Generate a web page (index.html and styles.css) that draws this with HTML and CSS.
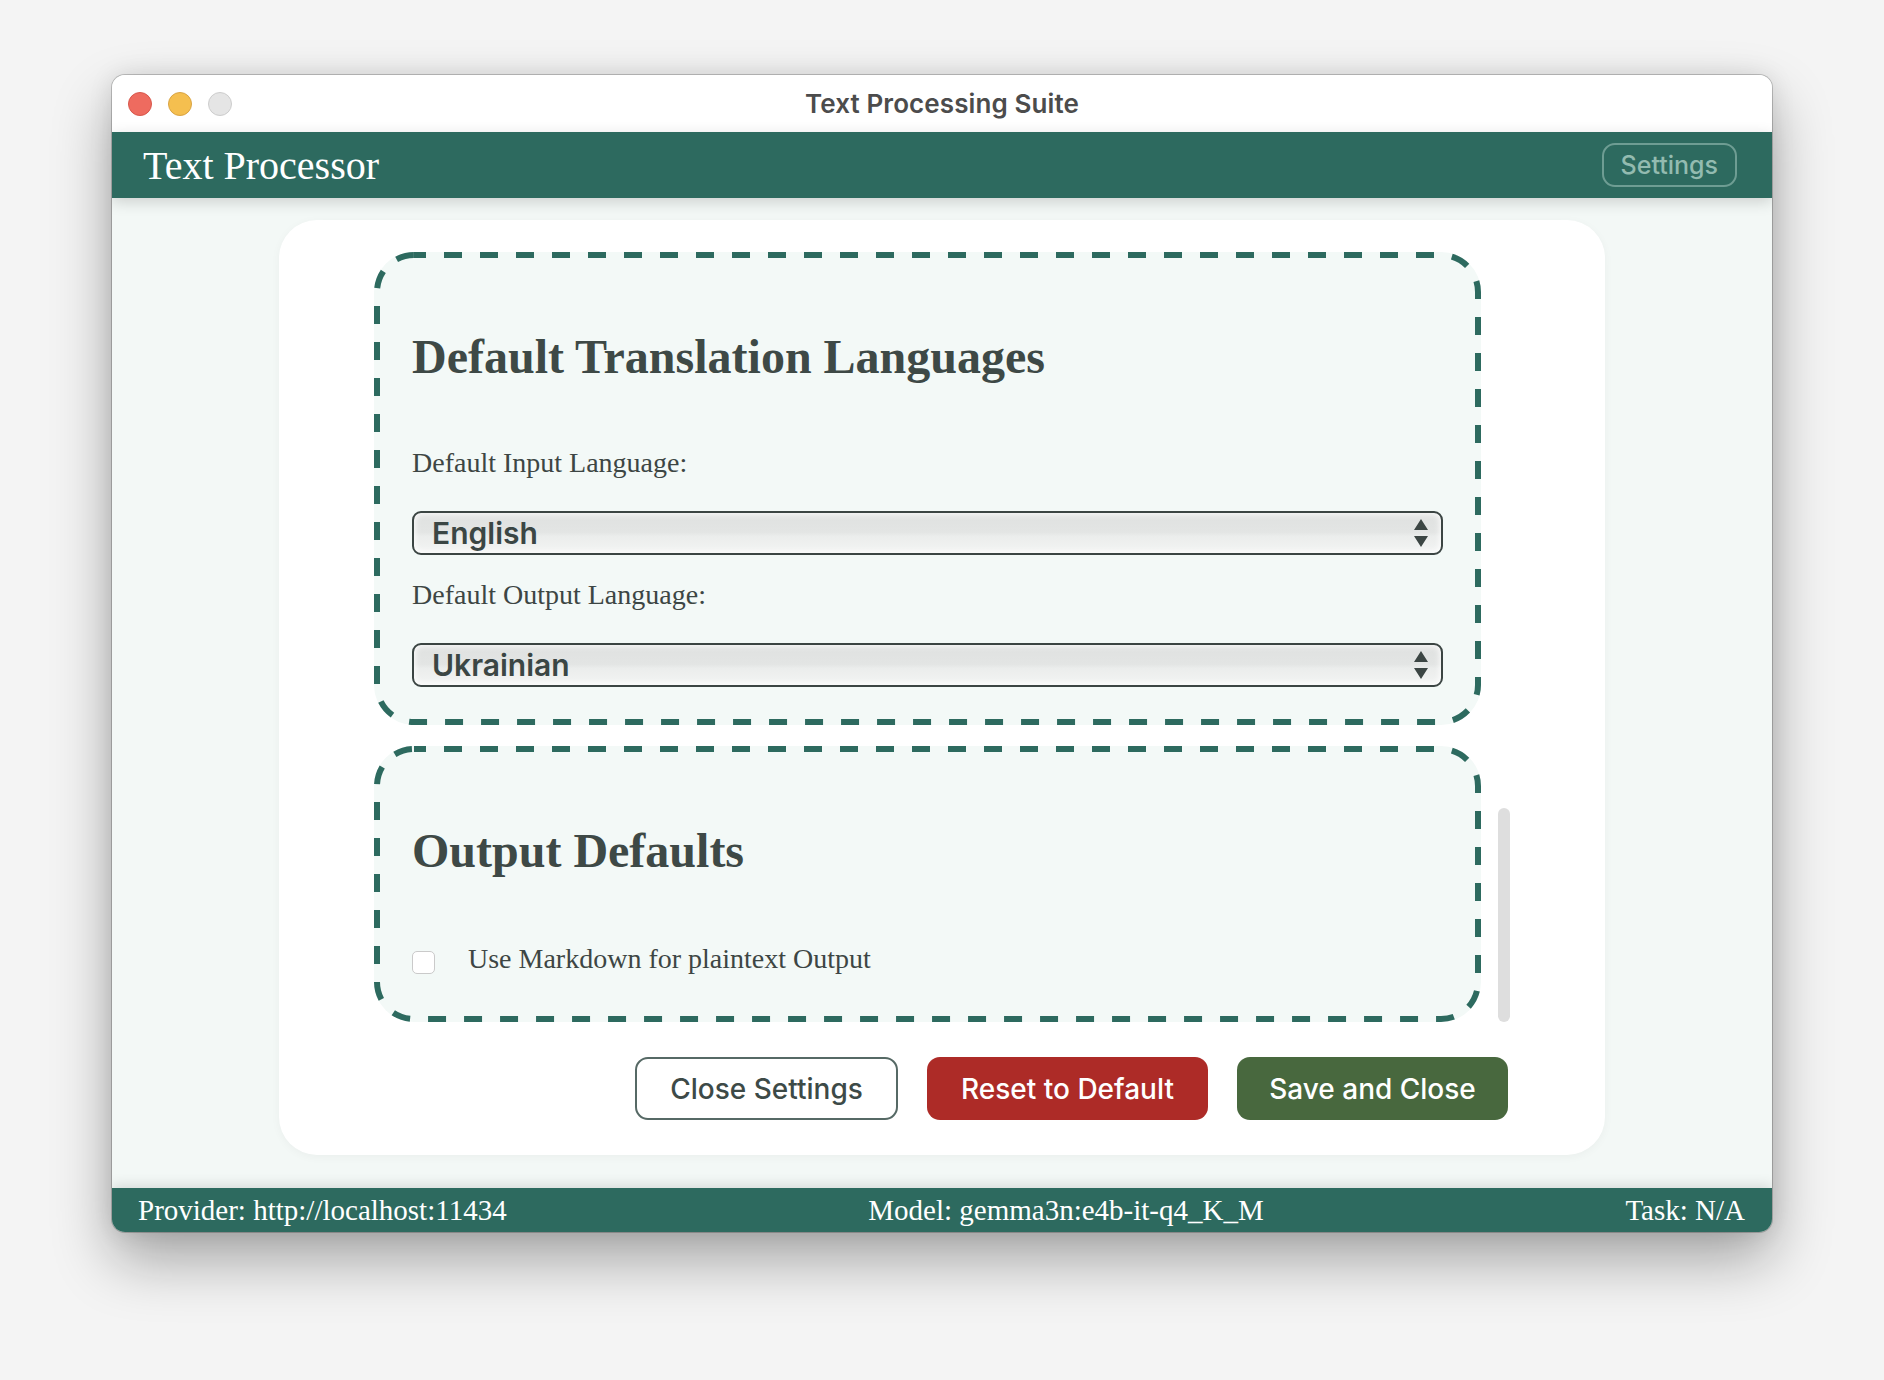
FILE: index.html
```html
<!DOCTYPE html>
<html lang="en">
<head>
<meta charset="utf-8">
<title>Text Processing Suite</title>
<link rel="stylesheet" href="styles.css">
</head>
<body>
<div class="window">
  <div class="titlebar">
    <div class="lights">
      <span class="light red"></span>
      <span class="light yellow"></span>
      <span class="light gray"></span>
    </div>
    <div class="title">Text Processing Suite</div>
    <div></div>
  </div>
  <header class="appbar">
    <h1 class="brand">Text Processor</h1>
    <button class="settings-btn">Settings</button>
  </header>
  <main class="content">
    <div class="card">
      <div class="scroll">
        <div class="sections">
          <section class="group">
            <svg class="dash-frame" aria-hidden="true"><rect class="dash-rect"/></svg>
            <h2 class="group-title">Default Translation Languages</h2>
            <label class="field-label">Default Input Language:</label>
            <div class="select">
              <span class="select-value">English</span>
              <svg class="select-arrows" width="14" height="29" viewBox="0 0 14 29"><path d="M7 0 L14 11 L0 11 Z M0 17 L14 17 L7 28 Z" fill="#3c4644"/></svg>
            </div>
            <label class="field-label">Default Output Language:</label>
            <div class="select">
              <span class="select-value">Ukrainian</span>
              <svg class="select-arrows" width="14" height="29" viewBox="0 0 14 29"><path d="M7 0 L14 11 L0 11 Z M0 17 L14 17 L7 28 Z" fill="#3c4644"/></svg>
            </div>
          </section>
          <section class="group">
            <svg class="dash-frame" aria-hidden="true"><rect class="dash-rect"/></svg>
            <h2 class="group-title">Output Defaults</h2>
            <div class="check-row">
              <span class="checkbox"></span>
              <span class="check-label">Use Markdown for plaintext Output</span>
            </div>
          </section>
        </div>
        <div class="scrolltrack"><div class="thumb"></div></div>
      </div>
      <div class="actions">
        <button class="btn btn-outline">Close Settings</button>
        <button class="btn btn-red">Reset to Default</button>
        <button class="btn btn-green">Save and Close</button>
      </div>
    </div>
  </main>
  <footer class="statusbar">
    <span>Provider: http://localhost:11434</span>
    <span>Model: gemma3n:e4b-it-q4_K_M</span>
    <span>Task: N/A</span>
  </footer>
</div>
</body>
</html>
```

FILE: styles.css
```css
* { box-sizing: border-box; }

html, body {
  margin: 0;
  padding: 0;
}

body {
  width: 1884px;
  height: 1380px;
  background: #f4f4f4;
  display: flex;
  justify-content: center;
  align-items: flex-start;
  padding-top: 75px;
  font-family: "Liberation Serif", "Times New Roman", serif;
  overflow: hidden;
}

.window {
  width: 1660px;
  height: 1157px;
  border-radius: 13px;
  overflow: hidden;
  display: flex;
  flex-direction: column;
  background: #f3f8f6;
  box-shadow: 0 0 0 1px rgba(0, 0, 0, 0.2), 0 28px 60px rgba(0, 0, 0, 0.33), 0 0 24px rgba(0, 0, 0, 0.1);
}

/* Title bar */
.titlebar {
  height: 57px;
  flex: none;
  background: #ffffff;
  display: grid;
  grid-template-columns: 1fr auto 1fr;
  align-items: center;
}

.lights {
  display: flex;
  gap: 16px;
  padding-left: 16px;
}

.light {
  width: 24px;
  height: 24px;
  border-radius: 50%;
  display: block;
}

.light.red { background: #ee6b5f; border: 1px solid #d8574c; }
.light.yellow { background: #f5bf4f; border: 1px solid #d9a444; }
.light.gray { background: #e5e5e5; border: 1px solid #cdcdcd; }

.title {
  font-family: Inter, "Open Sans", sans-serif;
  font-weight: 600;
  font-size: 26px;
  color: #4c4c4c;
  letter-spacing: 0.1px;
}

/* App header */
.appbar {
  position: relative;
  z-index: 2;
  height: 66px;
  flex: none;
  background: #2d6a5f;
  display: flex;
  align-items: center;
  justify-content: space-between;
  padding: 0 35px 0 31px;
  box-shadow: 0 4px 14px rgba(0, 0, 0, 0.16);
}

.brand {
  margin: 0;
  font-family: "Liberation Serif", "Times New Roman", serif;
  font-weight: normal;
  font-size: 40px;
  color: #ffffff;
}

.settings-btn {
  height: 44px;
  padding: 0 17px;
  border: 2px solid rgba(190, 220, 210, 0.45);
  border-radius: 13px;
  background: transparent;
  color: #93bbb0;
  font-family: Inter, "Open Sans", sans-serif;
  font-weight: 500;
  font-size: 25px;
}

/* Content */
.content {
  flex: 1;
  display: flex;
  justify-content: center;
  align-items: flex-start;
  padding-top: 22px;
}

.card {
  width: 1326px;
  background: #ffffff;
  border-radius: 38px;
  padding: 32px 95px 35px 95px;
  box-shadow: 0 2px 10px rgba(0, 0, 0, 0.04);
}

.scroll {
  display: flex;
}

.sections {
  width: 1107px;
  display: flex;
  flex-direction: column;
  gap: 21px;
}

.group {
  position: relative;
  border: 6px solid transparent;
  border-radius: 40px;
  background: #f3f9f7;
  padding: 32px;
  display: flex;
  flex-direction: column;
}

.dash-frame {
  position: absolute;
  top: -6px;
  left: -6px;
  width: calc(100% + 12px);
  height: calc(100% + 12px);
  pointer-events: none;
}

.dash-rect {
  x: 3px;
  y: 3px;
  width: calc(100% - 6px);
  height: calc(100% - 6px);
  rx: 37px;
  ry: 37px;
  fill: none;
  stroke: #2d6a5f;
  stroke-width: 6px;
  stroke-dasharray: 18px 18px;
  stroke-dashoffset: 6px;
}

.group-title {
  margin: 39px 0 38px;
  font-family: "Liberation Serif", "Times New Roman", serif;
  font-weight: bold;
  font-size: 48px;
  line-height: 56px;
  color: #3e4946;
}

.field-label {
  display: block;
  margin: 24px 0 32px;
  font-size: 28px;
  line-height: 32px;
  color: #3d4644;
}

.select {
  height: 44px;
  border: 2px solid #3b4543;
  border-radius: 9px;
  display: flex;
  align-items: center;
  justify-content: space-between;
  padding: 0 13px 0 18px;
  background: linear-gradient(to bottom, #dfe1e0 0%, #e3e5e4 48%, #ebedec 58%, #f3f4f3 100%);
  box-shadow: inset 0 0 6px 1px rgba(255, 255, 255, 0.95);
}

.select-value {
  font-family: Inter, "Open Sans", sans-serif;
  font-weight: 600;
  font-size: 30px;
  color: #3b4644;
}

.select-arrows {
  display: block;
}

.check-row {
  display: flex;
  align-items: flex-start;
  margin: 26px 0 9px;
  line-height: 32px;
}

.checkbox {
  width: 23px;
  height: 23px;
  margin-top: 8px;
  border: 1px solid #cacaca;
  border-radius: 5px;
  background: #ffffff;
  flex: none;
}

.check-label {
  margin-left: 33px;
  font-size: 28px;
  color: #3d4644;
}

.scrolltrack {
  flex: 1;
  display: flex;
  flex-direction: column;
  justify-content: flex-end;
  padding-left: 17px;
}

.thumb {
  width: 12px;
  height: 214px;
  border-radius: 6px;
  background: #dedede;
}

/* Actions */
.actions {
  display: flex;
  justify-content: flex-end;
  gap: 29px;
  margin-top: 35px;
  padding-right: 2px;
}

.btn {
  height: 63px;
  padding: 0;
  border-radius: 13px;
  font-family: Inter, "Open Sans", sans-serif;
  font-weight: 500;
  font-size: 28px;
  border: 2px solid transparent;
  text-align: center;
}

.btn-outline {
  width: 263px;
  background: #ffffff;
  border-color: #566965;
  color: #3d4a47;
}

.btn-red {
  width: 281px;
  background: #ad2b27;
  color: #ffffff;
}

.btn-green {
  width: 271px;
  background: #48683e;
  color: #ffffff;
}

/* Footer */
.statusbar {
  height: 44px;
  flex: none;
  background: #2d6a5f;
  color: #ffffff;
  display: flex;
  align-items: center;
  justify-content: space-between;
  padding: 0 27px 0 26px;
  font-size: 29px;
  box-shadow: 0 -3px 12px rgba(0, 0, 0, 0.12);
}
```
